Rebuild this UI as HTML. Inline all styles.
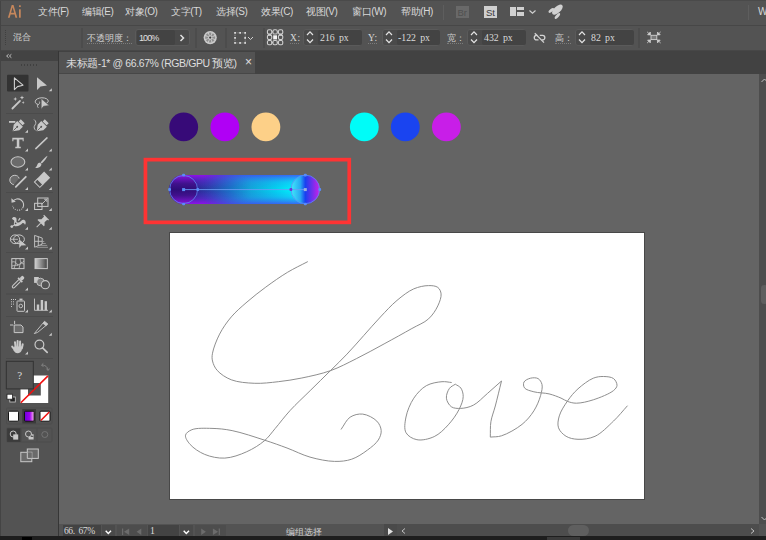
<!DOCTYPE html>
<html><head><meta charset="utf-8">
<style>
*{margin:0;padding:0;box-sizing:border-box}
html,body{width:766px;height:540px;overflow:hidden;background:#535353;font-family:"Liberation Sans",sans-serif;color:#d8d8d8}
.a{position:absolute}
.t{position:absolute;white-space:nowrap;font-size:10px;line-height:12px;letter-spacing:-0.4px}
.m{position:absolute;white-space:nowrap;font-family:"Liberation Serif",serif;font-size:9.8px;line-height:12px;letter-spacing:0;word-spacing:1.8px;color:#dadada}
.s{position:absolute;white-space:nowrap;font-family:"Liberation Serif",serif;font-size:9px;line-height:12px;color:#d0d0d0}
.box{position:absolute;background:#424242;border-radius:2px}
.obox{position:absolute;border:1px solid #5a5a5a;border-radius:3px;background:#4a4a4a}
.vs{position:absolute;width:2px;background:#4c4c4c}
.ul{position:absolute;height:1px;border-top:1px dotted #7c7c7c}
svg{position:absolute;overflow:visible}
</style></head><body>
<!-- base regions -->
<div class="a" style="left:0;top:0;width:766px;height:25px;background:#535353"></div>
<div class="a" style="left:0;top:25px;width:766px;height:1px;background:#474747"></div>
<div class="a" style="left:0;top:26px;width:766px;height:25px;background:#535353"></div>
<div class="a" style="left:0;top:50px;width:766px;height:1px;background:#474747"></div>
<div class="a" style="left:59px;top:51px;width:707px;height:23px;background:#424242"></div>
<div class="a" style="left:59px;top:52px;width:196px;height:22px;background:#535353"></div>
<div class="a" style="left:0;top:51px;width:58px;height:486px;background:#535353"></div>
<div class="a" style="left:1px;top:51px;width:57px;height:10px;background:#434343"></div>
<div class="a" style="left:0;top:0;width:1px;height:540px;background:#444"></div>
<div class="a" style="left:0;top:0;width:766px;height:1px;background:#4a4a4a"></div>
<div class="a" style="left:59px;top:73px;width:196px;height:1px;background:#474747"></div>
<div class="a" style="left:57.5px;top:51px;width:1.5px;height:486px;background:#363636"></div>
<div class="a" style="left:59px;top:74px;width:700px;height:450px;background:#646464"></div>
<div class="a" style="left:759px;top:74px;width:7px;height:450px;background:#4d4d4d"></div>
<div class="a" style="left:760.5px;top:284.5px;width:7px;height:19.5px;background:#5f5f5f;border-radius:6px"></div>
<div class="a" style="left:759px;top:524px;width:7px;height:12px;background:#535353"></div>
<div class="a" style="left:59px;top:524px;width:700px;height:12px;background:#535353"></div>
<div class="a" style="left:0;top:536px;width:766px;height:4px;background:#1e1e1e"></div>
<div class="a" style="left:22px;top:537px;width:10px;height:3px;background:#000"></div>
<div class="a" style="left:547px;top:537px;width:33px;height:3px;background:#3a3a3a"></div>

<!-- menu -->
<svg style="left:0;top:0" width="30" height="25"><g fill="#c6875c"><path d="M11.7 5 H13.5 L17.3 17.7 H15.5 L14.6 14.4 H10.6 L9.7 17.7 H7.9Z M11.05 12.8 H14.15 L12.6 7.2Z"/><rect x="19" y="9.3" width="1.75" height="8.4"/><rect x="18.95" y="5.2" width="1.85" height="1.9" rx="0.5"/></g></svg>
<div class="t" style="left:38px;top:6px">文件(F)</div>
<div class="t" style="left:82px;top:6px">编辑(E)</div>
<div class="t" style="left:125px;top:6px">对象(O)</div>
<div class="t" style="left:171px;top:6px">文字(T)</div>
<div class="t" style="left:216px;top:6px">选择(S)</div>
<div class="t" style="left:261px;top:6px">效果(C)</div>
<div class="t" style="left:306px;top:6px">视图(V)</div>
<div class="t" style="left:352px;top:6px">窗口(W)</div>
<div class="t" style="left:401px;top:6px">帮助(H)</div>
<div class="a" style="left:443px;top:5px;width:1px;height:15px;background:#5e5e5e"></div>
<div class="a" style="left:456px;top:6px;width:13px;height:12px;background:#696969"></div>
<div class="t" style="left:457.5px;top:6.5px;font-size:9.5px;letter-spacing:0;color:#505050">Br</div>
<div class="a" style="left:484px;top:6px;width:13px;height:12px;background:#cfcfcf"></div>
<div class="t" style="left:486px;top:6.5px;font-size:9.5px;letter-spacing:0;color:#3a3a3a">St</div>
<div class="a" style="left:510px;top:7px;width:6px;height:9px;background:#d0d0d0"></div>
<div class="a" style="left:517px;top:7px;width:7px;height:3px;background:#d0d0d0"></div>
<div class="a" style="left:517px;top:12px;width:7px;height:4px;background:#d0d0d0"></div>
<svg style="left:529px;top:10px" width="8" height="4"><path d="M0.5 0.5 L3.5 3.2 L6.5 0.5" stroke="#d0d0d0" stroke-width="1.2" fill="none"/></svg>
<svg style="left:540px;top:0" width="30" height="25"><g fill="#d0d0d0"><ellipse cx="17.4" cy="9.6" rx="6.6" ry="3.2" transform="rotate(-42 17.4 9.6)"/><ellipse cx="11.3" cy="10.4" rx="3.3" ry="1.5" transform="rotate(-39 11.3 10.4)"/><ellipse cx="17.4" cy="16" rx="3.6" ry="1.5" transform="rotate(-47 17.4 16)"/></g></svg>
<div class="a" style="left:748px;top:5px;width:1px;height:15px;background:#5e5e5e"></div>
<div class="t" style="left:758px;top:6px;letter-spacing:0">W</div>

<!-- control bar -->
<div class="a" style="left:5px;top:30px;width:0;height:15px;border-left:1px dotted #404040"></div>
<div class="s" style="left:13px;top:31px">混合</div>
<div class="vs" style="left:81px;top:28px;height:20px"></div>
<div class="s" style="left:87px;top:32px">不透明度：</div>
<div class="ul" style="left:87px;top:42.6px;width:45px"></div>
<div class="obox" style="left:135px;top:29px;width:55px;height:16.5px"></div>
<div class="box" style="left:137px;top:30px;width:38px;height:14.5px;background:#434343"></div>
<div class="t" style="left:139px;top:32px;font-size:9px;letter-spacing:-0.9px;color:#e0e0e0">100%</div>
<svg style="left:179px;top:34px" width="6" height="8"><path d="M1.5 1 L4.5 4 L1.5 7" stroke="#e0e0e0" stroke-width="1.5" fill="none"/></svg>
<div class="vs" style="left:195px;top:28px;height:20px"></div>
<!-- recolor globe -->
<svg style="left:203px;top:30px" width="15" height="15" viewBox="0 0 15 15"><circle cx="7.2" cy="7.6" r="6.6" fill="#cacaca"/><path d="M9.33 7.03 L12.03 6.31 A5 5 0 0 1 12.03 8.89 L9.33 8.17 Z M9.11 8.70 L11.53 10.10 A5 5 0 0 1 9.70 11.93 L8.30 9.51 Z M7.77 9.73 L8.49 12.43 A5 5 0 0 1 5.91 12.43 L6.63 9.73 Z M6.10 9.51 L4.70 11.93 A5 5 0 0 1 2.87 10.10 L5.29 8.70 Z M5.07 8.17 L2.37 8.89 A5 5 0 0 1 2.37 6.31 L5.07 7.03 Z M5.29 6.50 L2.87 5.10 A5 5 0 0 1 4.70 3.27 L6.10 5.69 Z M6.63 5.47 L5.91 2.77 A5 5 0 0 1 8.49 2.77 L7.77 5.47 Z M8.30 5.69 L9.70 3.27 A5 5 0 0 1 11.53 5.10 L9.11 6.50 Z" fill="#8e8e8e"/><circle cx="7.2" cy="7.6" r="1.1" fill="#3a3a3a"/></svg>
<div class="vs" style="left:225px;top:28px;height:20px"></div>
<!-- transform box -->
<svg style="left:234px;top:32px" width="20" height="12" viewBox="0 0 20 12">
<rect x="1" y="0.85" width="10.2" height="10.1" fill="none" stroke="#b8b8b8" stroke-width="0.7" stroke-dasharray="0.8 0.9"/>
<g fill="#e0e0e0"><rect x="0.2" y="0" width="1.7" height="1.7"/><rect x="10.3" y="0" width="1.7" height="1.7"/><rect x="0.2" y="10.1" width="1.7" height="1.7"/><rect x="10.3" y="10.1" width="1.7" height="1.7"/><rect x="5.25" y="0" width="1.7" height="1.7"/><rect x="5.25" y="10.1" width="1.7" height="1.7"/><rect x="0.2" y="5.05" width="1.7" height="1.7"/><rect x="10.3" y="5.05" width="1.7" height="1.7"/></g>
<path d="M14 5 L16.5 7.5 L19 5" stroke="#d0d0d0" stroke-width="1" fill="none"/>
</svg>
<div class="vs" style="left:263px;top:28px;height:20px"></div>
<!-- reference point -->
<svg style="left:266px;top:28px" width="19" height="19" viewBox="0 0 19 19"><g fill="none" stroke="#cfcfcf" stroke-width="1.1"><rect x="1.45" y="1.75" width="4.3" height="4.3" rx="1.4" /><rect x="6.95" y="1.75" width="4.3" height="4.3" rx="1.4" /><rect x="12.45" y="1.75" width="4.3" height="4.3" rx="1.4" /><rect x="1.45" y="7.15" width="4.3" height="4.3" rx="1.4" /><rect x="12.45" y="7.15" width="4.3" height="4.3" rx="1.4" /><rect x="1.45" y="12.45" width="4.3" height="4.3" rx="1.4" /><rect x="6.95" y="12.45" width="4.3" height="4.3" rx="1.4" /><rect x="12.45" y="12.45" width="4.3" height="4.3" rx="1.4" /><path d="M5.80 3.90 H6.90 M11.30 3.90 H12.40 M5.80 14.60 H6.90 M11.30 14.60 H12.40 M2.20 5.90 L5.00 7.30 M5.00 5.90 L2.20 7.30 M2.20 11.30 L5.00 12.60 M5.00 11.30 L2.20 12.60 M13.20 5.90 L16.00 7.30 M16.00 5.90 L13.20 7.30 M13.20 11.30 L16.00 12.60 M16.00 11.30 L13.20 12.60"/></g><rect x="7.20" y="7.30" width="3.8" height="3.8" fill="#f4f4f4"/><rect x="7.20" y="11.10" width="3.8" height="0.9" fill="#9a9a9a"/></svg>
<!-- X -->
<div class="s" style="left:290px;top:32px;font-size:9.5px;letter-spacing:0.6px;color:#d8d8d8">X:</div>
<div class="ul" style="left:290px;top:42.6px;width:9px"></div>
<div class="obox" style="left:303px;top:29px;width:59px;height:16.5px"></div>
<svg style="left:305.8px;top:31px" width="8" height="13"><path d="M1 4 L4 0.8 L7 4 M1 8.5 L4 11.7 L7 8.5" stroke="#e4e4e4" stroke-width="1.2" fill="none"/></svg>
<div class="box" style="left:318px;top:30px;width:44px;height:14.5px;background:#434343"></div>
<div class="m" style="left:320px;top:32px">216 px</div>
<!-- Y -->
<div class="s" style="left:368px;top:32px;font-size:9.5px;letter-spacing:0.6px;color:#d8d8d8">Y:</div>
<div class="ul" style="left:368px;top:42.6px;width:9px"></div>
<div class="obox" style="left:382px;top:29px;width:58px;height:16.5px"></div>
<svg style="left:384.8px;top:31px" width="8" height="13"><path d="M1 4 L4 0.8 L7 4 M1 8.5 L4 11.7 L7 8.5" stroke="#e4e4e4" stroke-width="1.2" fill="none"/></svg>
<div class="box" style="left:397px;top:30px;width:43px;height:14.5px;background:#434343"></div>
<div class="m" style="left:398px;top:32px">-122 px</div>
<!-- W -->
<div class="s" style="left:447px;top:32px">宽：</div>
<div class="ul" style="left:447px;top:42.6px;width:16px"></div>
<div class="obox" style="left:467px;top:29px;width:59px;height:16.5px"></div>
<svg style="left:469.8px;top:31px" width="8" height="13"><path d="M1 4 L4 0.8 L7 4 M1 8.5 L4 11.7 L7 8.5" stroke="#e4e4e4" stroke-width="1.2" fill="none"/></svg>
<div class="box" style="left:482px;top:30px;width:44px;height:14.5px;background:#434343"></div>
<div class="m" style="left:484px;top:32px">432 px</div>
<!-- link -->
<svg style="left:533px;top:32px" width="13" height="12" viewBox="0 0 13 12"><g fill="none" stroke="#d4d4d4" stroke-width="1.3"><path d="M4.3 3.4 H3.5 A2.25 2.25 0 0 0 3.5 7.9 H5.5 M6.8 3.4 H9.6 A2.25 2.25 0 0 1 9.6 7.9 H8.8"/><path d="M1.8 1.2 L11 10.6"/></g></svg>
<!-- H -->
<div class="s" style="left:555px;top:32px">高：</div>
<div class="ul" style="left:555px;top:42.6px;width:16px"></div>
<div class="obox" style="left:575px;top:29px;width:59px;height:16.5px"></div>
<svg style="left:577.8px;top:31px" width="8" height="13"><path d="M1 4 L4 0.8 L7 4 M1 8.5 L4 11.7 L7 8.5" stroke="#e4e4e4" stroke-width="1.2" fill="none"/></svg>
<div class="box" style="left:590px;top:30px;width:44px;height:14.5px;background:#434343"></div>
<div class="m" style="left:591px;top:32px">82 px</div>
<div class="vs" style="left:638px;top:28px;height:20px"></div>
<svg style="left:646px;top:31px" width="16" height="14" viewBox="0 0 16 14"><rect x="5" y="4.3" width="5.8" height="4.3" fill="#7a7a7a" stroke="#d0d0d0" stroke-width="0.9"/><path d="M4.40 3.90 L1.60 3.75 L4.30 1.05 Z M4.40 3.90 L1.10 0.85 M4.40 9.00 L1.60 9.15 L4.30 11.85 Z M4.40 9.00 L1.10 12.05 M11.40 3.90 L14.20 3.75 L11.50 1.05 Z M11.40 3.90 L14.70 0.85 M11.40 9.00 L14.20 9.15 L11.50 11.85 Z M11.40 9.00 L14.70 12.05" fill="#d0d0d0" stroke="#d0d0d0" stroke-width="0.8" stroke-linejoin="round"/></svg>


<svg style="left:0;top:0" width="60" height="470" viewBox="0 0 60 470">
<!-- header << -->
<path d="M8.6 54.3 L6.6 56 L8.6 57.7 M11.4 54.3 L9.4 56 L11.4 57.7" stroke="#c0c0c0" stroke-width="1" fill="none"/>
<g fill="#404040"><rect x="21" y="64" width="1" height="2"/><rect x="24" y="64" width="1" height="2"/><rect x="27" y="64" width="1" height="2"/><rect x="30" y="64" width="1" height="2"/><rect x="33" y="64" width="1" height="2"/><rect x="36" y="64" width="1" height="2"/></g>
<!-- selection tool -->
<rect x="7" y="74.7" width="21.5" height="16.8" rx="1" fill="#333"/>
<path d="M14.4 77.8 V89.6 L17.5 86.6 L23 85.2 Z" fill="none" stroke="#d0d0d0" stroke-width="1.1" stroke-linejoin="round"/>
<path d="M37 77.3 V90 L40.5 86.5 L47 85.5 Z" fill="#c8c8c8"/>
<g fill="#c8c8c8">
<path d="M48.8 91.3 L51.8 91.3 L51.8 88.3Z"/>
<path d="M25 132.7 L28 132.7 L28 129.7Z"/>
<path d="M25 151.5 L28 151.5 L28 148.5Z M48.8 151.5 L51.8 151.5 L51.8 148.5Z"/>
<path d="M25 170.6 L28 170.6 L28 167.6Z M48.8 170.6 L51.8 170.6 L51.8 167.6Z"/>
<path d="M25 190 L28 190 L28 187Z M48.8 190 L51.8 190 L51.8 187Z"/>
<path d="M25 211 L28 211 L28 208Z M48.8 211 L51.8 211 L51.8 208Z"/>
<path d="M25 229.8 L28 229.8 L28 226.8Z M48.8 229.8 L51.8 229.8 L51.8 226.8Z"/>
<path d="M25 249.5 L28 249.5 L28 246.5Z M48.8 249.5 L51.8 249.5 L51.8 246.5Z"/>
<path d="M25 290.5 L28 290.5 L28 287.5Z"/>
<path d="M25 312.5 L28 312.5 L28 309.5Z M48.8 312.5 L51.8 312.5 L51.8 309.5Z"/>
<path d="M48.8 335.8 L51.8 335.8 L51.8 332.8Z"/>
<path d="M25 354.6 L28 354.6 L28 351.6Z"/>
</g>
<!-- separators -->
<g fill="#4b4b4b"><rect x="6" y="113" width="47" height="1"/><rect x="6" y="192" width="47" height="1"/><rect x="6" y="252" width="47" height="1"/><rect x="6" y="293.5" width="47" height="1"/><rect x="6" y="316" width="47" height="1"/><rect x="6" y="358" width="47" height="1"/></g>
<!-- magic wand -->
<path d="M12.4 108.5 L20 100.9" stroke="#c8c8c8" stroke-width="1.8" stroke-linecap="round"/>
<path d="M15.30 96.90 L15.90 98.40 L17.40 99.00 L15.90 99.60 L15.30 101.10 L14.70 99.60 L13.20 99.00 L14.70 98.40 Z M22.00 95.50 L22.60 97.00 L24.10 97.60 L22.60 98.20 L22.00 99.70 L21.40 98.20 L19.90 97.60 L21.40 97.00 Z M23.20 101.10 L23.65 102.15 L24.70 102.60 L23.65 103.05 L23.20 104.10 L22.75 103.05 L21.70 102.60 L22.75 102.15 Z" fill="#c8c8c8"/>
<!-- lasso -->
<path d="M38.5 104.6 C36 104 35 102.8 35.3 101.2 C35.8 99 38.8 97.8 42 97.8 C45.5 97.8 48 99 48.2 100.8 C48.3 102 47.3 103 46 103.5" fill="none" stroke="#c8c8c8" stroke-width="1"/>
<path d="M38.6 104.4 C37.3 105 37 106.5 38.3 107.8 M38.6 104.4 C39.6 103.6 40 102.4 39.4 101.6" fill="none" stroke="#c8c8c8" stroke-width="0.9"/>
<path d="M41.2 98.6 V109.2 L43.6 106.2 L49.3 105.6Z" fill="#c8c8c8" stroke="#535353" stroke-width="0.6"/>
<!-- pen -->
<rect x="9" y="121" width="6.3" height="1.8" fill="#c8c8c8"/>
<g transform="translate(13,131) rotate(45)"><path d="M0 0.5 L-4 -5 L-4 -10 L4 -10 L4 -5Z M-2.8 -13.8 H2.8 V-10.8 H-2.8Z" fill="#c8c8c8"/><path d="M0 -0.5 V-5.5" stroke="#535353" stroke-width="0.8"/><circle cx="0" cy="-6" r="0.9" fill="#535353"/></g>
<!-- curvature pen -->
<g transform="translate(37,131) rotate(45)"><path d="M0 0.5 L-4 -5 L-4 -10 L4 -10 L4 -5Z M-2.8 -13.8 H2.8 V-10.8 H-2.8Z" fill="#c8c8c8"/><path d="M0 -0.5 V-5.5" stroke="#535353" stroke-width="0.8"/><circle cx="0" cy="-6" r="0.9" fill="#535353"/></g>
<path d="M34 119.5 C36 121 36.5 123 35 125 C33.5 127 34 129 36 130.5" fill="none" stroke="#c8c8c8" stroke-width="0.9"/>
<!-- T -->
<path d="M12.3 137.8 H23.7 V141.3 H22.6 V139.6 H19.3 V146.7 H20.8 V148.3 H15.3 V146.7 H16.8 V139.6 H13.4 V141.3 H12.3Z" fill="#c8c8c8"/>
<!-- line -->
<path d="M35.8 148.6 L47 137.9" stroke="#c8c8c8" stroke-width="1.5" stroke-linecap="round"/>
<!-- ellipse -->
<ellipse cx="17.9" cy="162" rx="6.9" ry="5.2" fill="#6b6b6b" stroke="#c8c8c8" stroke-width="1.1"/>
<!-- brush -->
<path d="M47.6 155.8 C47 158 44 161.5 41.8 163.6 L40.6 162.4 C42.6 160.2 45.6 156.6 47.6 155.8Z" fill="#c8c8c8"/>
<path d="M40.2 162.8 L41.4 164 C41.5 166.5 39 168.3 35 168 C36.6 166.8 36.8 165.6 37.4 164.4 C38 163.2 39 162.8 40.2 162.8Z" fill="#c8c8c8"/>
<!-- shaper -->
<path d="M19.2 178.5 C18.5 176.2 16.8 175.3 14.8 175.3 C12 175.3 9.8 177.4 9.8 180 C9.8 182.4 11.5 184.3 13.8 184.7" fill="#6b6b6b" stroke="#c8c8c8" stroke-width="1"/>
<path d="M15.8 186.8 L25.8 176.8" stroke="#c8c8c8" stroke-width="1.8" stroke-linecap="round"/>
<!-- eraser -->
<g transform="translate(41.5,180.3) rotate(45)"><rect x="-4.3" y="-8" width="8.6" height="10" fill="#c8c8c8"/><rect x="-3.8" y="2" width="7.6" height="4.2" fill="none" stroke="#c8c8c8" stroke-width="1"/></g>
<!-- rotate -->
<path d="M12.8 201.5 A5.8 5.8 0 1 1 22.6 208.2" fill="none" stroke="#c8c8c8" stroke-width="1.1"/>
<path d="M22 208.8 A5.8 5.8 0 0 1 12.6 205.8" fill="none" stroke="#c8c8c8" stroke-width="1.1" stroke-dasharray="1 1.2"/>
<path d="M11.3 198.3 L11.6 202.8 L15.8 201.8Z" fill="#c8c8c8"/>
<!-- scale -->
<rect x="37.7" y="198" width="10.3" height="8.4" fill="none" stroke="#c8c8c8" stroke-width="1"/>
<rect x="34.6" y="203.3" width="7.4" height="6.2" fill="none" stroke="#c8c8c8" stroke-width="1"/>
<path d="M41.5 204.5 L46.6 199.4 M44.2 199.3 H46.8 V201.9" fill="none" stroke="#c8c8c8" stroke-width="0.9"/>
<!-- width/warp -->
<path d="M12 218.5 C12.5 216.6 15.2 216.4 16.2 218 C17 219.5 16.2 221 16.7 222 C17.6 223 19.5 222.6 21 221 C22.5 219.4 24.6 219.4 25.5 221.4 C26 222.8 25.6 224.2 25 224.8 C24.6 223.6 23.6 222.6 22.6 223.1 C21 224.6 19 226.3 16 226.3 C14.6 226.3 13.8 225.6 13.8 224.2 C14 222.6 14.6 221.2 14 220.3 C13.4 219.7 12.3 219.6 12 218.5Z" fill="#c8c8c8"/>
<path d="M19.6 217.8 L20.6 218.5 L18.9 221 L18 220.3Z" fill="#c8c8c8"/>
<circle cx="15.6" cy="223.3" r="0.9" fill="#535353"/>
<circle cx="11.8" cy="226.6" r="1.4" fill="#c8c8c8"/>
<path d="M12.5 226 L14.5 225" stroke="#c8c8c8" stroke-width="0.9"/>
<!-- pin -->
<g transform="translate(42.3,221.5) rotate(45)"><path d="M-3.5 -6 H3.5 V-4.8 H2.2 V-1 L4.5 1.3 V2.3 H-4.5 V1.3 L-2.2 -1 V-4.8 H-3.5Z" fill="#c8c8c8"/><path d="M0 2.3 V8" stroke="#c8c8c8" stroke-width="1"/></g>
<!-- shape builder -->
<ellipse cx="15" cy="239.3" rx="4.6" ry="4.4" fill="none" stroke="#c8c8c8" stroke-width="1"/>
<ellipse cx="19" cy="239.3" rx="5.4" ry="4.4" fill="none" stroke="#c8c8c8" stroke-width="1"/>
<path d="M10.8 239.3 H18" stroke="#c8c8c8" stroke-width="0.8"/>
<path d="M19.3 239.5 V248 L21.3 245.6 L26.3 245.2Z" fill="#c8c8c8"/>
<!-- perspective -->
<path d="M34.6 235.4 L42.2 238 V244.2 L34.6 247.2Z M38.3 236.7 V245.8 M34.6 241.3 H42.2" fill="none" stroke="#c8c8c8" stroke-width="0.9"/>
<path d="M36.5 247.3 H48 M39 245.4 H47.2 M41.5 243.5 H45.8 M42.2 241.5 H44.3" stroke="#a8a8a8" stroke-width="0.8"/>
<!-- mesh -->
<rect x="11.8" y="258.6" width="12.2" height="10" fill="none" stroke="#c8c8c8" stroke-width="1"/>
<path d="M12 262 C15 261 17 263 18 266 M16 258.7 C15.5 261 16 264 14 268.5 M20 258.7 C20 262 22 264 24 264 M12 266 C15 265 19 266 24 261 M19 268.6 C19.5 266 20 264 21 262" fill="none" stroke="#c8c8c8" stroke-width="0.8"/>
<!-- gradient -->
<defs><linearGradient id="gt" x1="0" x2="1"><stop offset="0" stop-color="#d0d0d0"/><stop offset="1" stop-color="#444"/></linearGradient></defs>
<rect x="35" y="258.6" width="12.3" height="10" fill="url(#gt)" stroke="#c8c8c8" stroke-width="1"/>
<!-- eyedropper -->
<g transform="translate(17.6,282.6) rotate(45)"><path d="M-1.3 -3 V5.5 C-1.3 7.5 1.3 7.5 1.3 5.5 V-3" fill="none" stroke="#c8c8c8" stroke-width="1"/><rect x="-3" y="-4.5" width="6" height="1.6" fill="#c8c8c8"/><rect x="-1.8" y="-8.5" width="3.6" height="4.2" rx="1.5" fill="#c8c8c8"/></g>
<!-- blend tool -->
<rect x="34.1" y="277" width="4.7" height="5.9" fill="#c8c8c8"/>
<circle cx="40.5" cy="282" r="3.8" fill="#7a7a7a" stroke="#c8c8c8" stroke-width="0.9"/>
<circle cx="45.3" cy="284.7" r="4.1" fill="#535353" stroke="#c8c8c8" stroke-width="1.1"/>
<!-- symbol sprayer -->
<g fill="#c8c8c8"><rect x="11" y="299" width="1" height="1"/><rect x="13" y="299" width="1" height="1"/><rect x="15" y="299" width="1" height="1"/><rect x="11" y="301.3" width="1" height="1"/><rect x="13" y="301.3" width="1" height="1"/><rect x="11" y="303.6" width="1" height="1"/><rect x="13" y="303.6" width="1" height="1"/><rect x="11" y="306" width="1" height="1"/><rect x="19.5" y="298.6" width="3" height="1.8"/></g>
<rect x="17" y="301" width="7.5" height="10.3" rx="0.6" fill="none" stroke="#c8c8c8" stroke-width="1"/>
<circle cx="20.75" cy="306" r="1.8" fill="none" stroke="#c8c8c8" stroke-width="0.9"/>
<!-- graph -->
<path d="M34.5 298.6 V310.3 H48" fill="none" stroke="#c8c8c8" stroke-width="0.9"/>
<rect x="36.8" y="304.5" width="2.4" height="5.8" fill="#c8c8c8"/>
<rect x="40.7" y="300" width="2.4" height="10.3" fill="#c8c8c8"/>
<rect x="44.6" y="301.2" width="2.4" height="9.1" fill="#c8c8c8"/>
<!-- artboard -->
<path d="M10 325 H13.3 M14.6 320.8 V324" stroke="#c8c8c8" stroke-width="1"/>
<path d="M14.2 325 H21 L23 327 V332.6 H14.2Z" fill="#6b6b6b" stroke="#c8c8c8" stroke-width="1"/>
<!-- slice -->
<path d="M34.3 333.6 L44.5 321.3 L47.8 324 L37.6 332.4Z" fill="none" stroke="#c8c8c8" stroke-width="0.9"/>
<path d="M42.8 323.4 L44.5 321.3 L47.8 324 L46 326.2Z" fill="#c8c8c8"/>
<!-- hand -->
<g stroke="#c8c8c8" stroke-width="2" stroke-linecap="round" fill="none"><path d="M15 342.2 L15.6 347.5 M17.6 340.9 V347.5 M20.1 341.6 L19.9 347.5 M22.7 344.3 L21.8 348.5 M12.2 346.6 L14.8 350"/></g>
<path d="M14.2 346.5 H22.3 L21.6 350.5 C20.8 352.3 19.5 353.2 17.6 353.2 C15.6 353.2 14.5 352 13.6 350.5Z" fill="#c8c8c8"/>
<!-- zoom -->
<circle cx="39.4" cy="344.6" r="4.4" fill="none" stroke="#c8c8c8" stroke-width="1.2"/>
<path d="M42.6 347.8 L47.2 352.3" stroke="#c8c8c8" stroke-width="1.7" stroke-linecap="round"/>
</svg>

<svg style="left:0;top:0" width="60" height="470" viewBox="0 0 60 470">
<!-- stroke box -->
<path d="M20.5 375.6 H48.2 V403 H20.5Z M28 383 V395.6 H40.8 V383Z" fill="#fff" fill-rule="evenodd"/>
<path d="M20.8 402.7 L48 375.9" stroke="#f01010" stroke-width="1.6"/>
<!-- fill box -->
<rect x="6.3" y="361.3" width="27" height="27.6" fill="#535353" stroke="#333" stroke-width="1"/>
<text x="19.8" y="379.3" font-family="Liberation Serif" font-size="11" fill="#dcdcdc" text-anchor="middle">?</text>
<!-- swap -->
<path d="M42 365 C44 365 47 366 48 369.5 M41.5 365 L43.3 363.4 M41.5 365 L43.3 366.8 M48 370.5 L46.5 368.6 M48 370.5 L49.5 368.6" fill="none" stroke="#8a8a8a" stroke-width="0.9"/>
<!-- default -->
<rect x="9.8" y="397" width="5.5" height="5" fill="#222" stroke="#ccc" stroke-width="0.8"/>
<rect x="7" y="394.2" width="5.5" height="5" fill="#fff" stroke="#222" stroke-width="0.8"/>
<!-- color mode row -->
<rect x="6.5" y="408" width="45.5" height="16" rx="1" fill="none" stroke="#4d4d4d" stroke-width="1"/>
<rect x="8.5" y="411.2" width="10" height="10" rx="1" fill="#fff" stroke="#111" stroke-width="1"/>
<rect x="22.3" y="409" width="13.7" height="14.4" fill="#3b3b3b"/>
<defs><linearGradient id="gm" x1="0" x2="1"><stop offset="0" stop-color="#6a00d8"/><stop offset="0.55" stop-color="#a000f0"/><stop offset="1" stop-color="#ffc0f0"/></linearGradient></defs>
<rect x="24.5" y="411.2" width="9.6" height="10" rx="1" fill="url(#gm)" stroke="#111" stroke-width="1"/>
<rect x="40" y="411.2" width="10" height="10" rx="1" fill="#fff" stroke="#111" stroke-width="1"/>
<path d="M40.8 420.5 L49.3 412" stroke="#f01010" stroke-width="1.5"/>
<!-- draw modes -->
<rect x="6.7" y="428" width="45.3" height="14" rx="1" fill="none" stroke="#4d4d4d" stroke-width="1"/>
<rect x="7.1" y="428.3" width="13.4" height="13.6" fill="#3b3b3b"/>
<circle cx="13.2" cy="434" r="3" fill="none" stroke="#c8c8c8" stroke-width="1"/>
<rect x="13.2" y="434.4" width="5" height="5.2" fill="#c8c8c8"/>
<circle cx="28.5" cy="434" r="3" fill="none" stroke="#c8c8c8" stroke-width="1"/>
<path d="M28.6 437 H33.6 V439.6 H28.6Z M31 434.2 H33.6 V437" fill="#c8c8c8"/>
<circle cx="44.8" cy="434.5" r="3" fill="none" stroke="#777" stroke-width="0.9"/>
<path d="M21.4 428.5 V441.5 M37 428.5 V441.5" stroke="#4d4d4d" stroke-width="1"/>
<!-- screen mode -->
<rect x="27.3" y="449" width="11" height="9.4" fill="#6a6a6a" stroke="#c8c8c8" stroke-width="1"/>
<rect x="20.8" y="452.3" width="11" height="9.4" fill="#6a6a6a" stroke="#c8c8c8" stroke-width="1"/>
<path d="M27.3 452.3 H31.8 V458.4 H27.3Z" fill="#6a6a6a"/>
<path d="M27.3 452.3 V458.4 H31.8" fill="none" stroke="#c8c8c8" stroke-width="1"/>
</svg>

<!-- tab -->
<div class="t" style="left:66px;top:57px;font-size:10.5px;line-height:12px;letter-spacing:-0.4px;color:#dedede">未标题-1* @ 66.67% (RGB/GPU 预览)</div>
<div class="t" style="left:245px;top:56px;font-size:12px;letter-spacing:0;color:#e0e0e0">×</div>

<!-- artboard -->
<div class="a" style="left:169px;top:232px;width:476px;height:268px;background:#484848"></div>
<div class="a" style="left:170px;top:233px;width:474px;height:266px;background:#fff"></div>

<!-- circles -->
<svg style="left:0;top:0" width="766" height="540">
<circle cx="183.7" cy="126.9" r="14.4" fill="#370a78"/>
<circle cx="224.9" cy="126.9" r="14.4" fill="#b000f5"/>
<circle cx="265.9" cy="126.9" r="14.4" fill="#fdd088"/>
<circle cx="364.3" cy="126.9" r="14.4" fill="#00fcf8"/>
<circle cx="405.3" cy="126.9" r="14.4" fill="#1a44f0"/>
<circle cx="446.4" cy="126.9" r="14.4" fill="#c81ee8"/>
<rect x="145.45" y="159.65" width="203.8" height="62.7" fill="none" stroke="#f33" stroke-width="3.7"/>
</svg>

<!-- love -->
<svg style="left:0;top:0" width="766" height="540"><path d="M307.80 261.60 C301.10 265.13 294.43 268.15 287.70 272.20 C280.43 276.57 272.73 282.00 265.80 287.10 C259.20 291.95 252.88 296.90 247.00 302.00 C241.42 306.85 235.90 311.49 231.30 316.90 C226.79 322.21 222.74 328.02 219.60 334.10 C216.49 340.12 213.40 348.17 212.50 353.20 C211.94 356.31 211.88 358.35 212.50 361.00 C213.23 364.07 214.69 367.56 217.20 370.40 C220.38 374.01 225.72 377.65 231.30 379.80 C237.90 382.35 246.95 382.99 254.80 383.30 C262.62 383.61 270.49 382.58 278.30 381.70 C286.15 380.82 293.62 379.68 301.80 378.00 C310.91 376.12 321.25 373.96 330.40 370.70 C339.40 367.50 347.57 363.04 356.30 358.70 C365.47 354.14 374.85 348.92 384.10 343.90 C393.39 338.86 403.84 333.06 411.90 328.50 C418.16 324.96 424.08 322.91 428.50 318.90 C432.53 315.24 435.68 310.34 437.80 305.90 C439.67 301.98 441.44 297.24 441.10 293.90 C440.84 291.35 439.66 288.80 437.80 287.40 C435.68 285.80 431.95 285.55 428.50 285.60 C424.13 285.66 418.58 286.77 413.70 288.90 C408.06 291.36 402.36 295.94 397.00 300.40 C391.23 305.20 385.87 311.23 380.40 317.00 C374.76 322.95 369.27 329.41 363.70 335.60 C358.14 341.78 352.63 348.17 347.00 354.10 C341.53 359.86 336.22 364.93 330.40 370.70 C324.01 377.04 316.92 383.96 310.20 390.60 C303.49 397.23 296.16 403.87 290.10 410.50 C284.57 416.54 279.69 423.21 275.10 428.60 C271.32 433.04 268.88 436.96 264.60 440.60 C259.69 444.77 253.26 448.81 246.80 451.70 C240.05 454.72 232.01 457.74 224.80 458.10 C217.99 458.44 210.64 456.85 204.70 454.40 C199.17 452.12 193.35 448.12 190.10 444.40 C187.62 441.56 184.99 437.72 185.50 435.20 C185.96 432.92 188.90 430.92 191.90 429.70 C196.53 427.81 205.31 428.25 212.00 428.40 C218.71 428.55 224.65 429.11 232.10 430.60 C241.80 432.54 255.17 437.13 265.00 440.30 C273.10 442.91 279.61 445.25 287.00 448.00 C294.61 450.84 302.10 454.87 310.00 457.10 C317.93 459.34 327.04 461.23 334.50 461.40 C340.73 461.54 346.27 461.04 351.70 459.20 C357.25 457.32 362.81 453.49 367.40 450.10 C371.56 447.03 376.02 443.65 378.30 440.00 C380.17 437.02 381.42 433.62 381.20 430.50 C380.97 427.31 379.32 423.68 376.80 421.10 C373.70 417.92 367.36 414.61 362.70 414.10 C358.47 413.63 353.63 414.85 350.10 417.20 C346.27 419.75 344.03 425.40 341.00 429.50 M451.70 382.50 C448.47 382.23 445.59 381.40 442.00 381.70 C437.36 382.09 430.92 383.07 426.30 385.70 C421.47 388.45 417.13 393.23 413.80 398.20 C410.23 403.54 407.22 410.90 406.00 417.00 C404.93 422.36 403.90 428.86 406.00 432.70 C407.90 436.19 412.66 438.85 416.90 439.70 C421.84 440.69 429.01 439.02 434.20 436.60 C439.51 434.12 444.16 429.32 448.30 424.80 C452.51 420.20 456.68 414.31 459.20 409.20 C461.30 404.94 463.13 400.41 463.20 396.60 C463.26 393.47 462.31 390.11 460.80 388.00 C459.50 386.17 457.13 385.47 455.30 384.20 M455.30 384.20 C453.37 385.57 450.95 386.32 449.50 388.30 C447.75 390.70 446.05 395.09 446.40 398.20 C446.74 401.25 448.96 405.11 451.40 406.80 C453.79 408.46 457.46 408.54 460.80 408.40 C464.69 408.24 469.23 407.27 473.30 405.20 C478.14 402.73 482.73 397.50 487.40 393.50 C492.13 389.44 496.80 385.17 501.50 381.00 M501.50 381.00 C499.43 389.33 497.24 398.64 495.30 406.00 C493.75 411.85 491.73 416.44 490.90 421.70 C490.10 426.81 490.50 431.97 490.30 437.10 M490.30 437.10 C494.03 436.67 497.36 437.13 501.50 435.80 C507.48 433.88 516.40 428.93 522.00 424.40 C526.92 420.43 530.77 415.73 533.90 410.80 C536.91 406.06 539.28 400.27 540.60 395.50 C541.67 391.61 542.70 387.50 542.00 384.50 C541.44 382.11 539.96 379.66 538.10 378.60 C536.17 377.50 532.86 377.63 530.50 378.20 C528.16 378.77 524.92 380.23 524.00 382.00 C523.19 383.57 523.37 386.36 524.50 387.90 C525.98 389.93 530.32 390.83 533.90 391.80 C538.29 392.99 544.40 392.76 549.10 393.90 C553.37 394.94 557.62 396.67 561.00 398.10 C563.62 399.21 565.35 400.66 567.80 401.50 C570.42 402.40 572.98 403.20 576.30 403.20 C580.99 403.20 587.49 401.68 593.30 399.80 C599.89 397.66 609.85 393.69 613.60 390.50 C615.56 388.83 616.88 387.26 617.00 385.40 C617.13 383.33 615.55 380.10 613.60 378.60 C611.32 376.85 606.80 376.56 603.40 376.50 C600.03 376.44 596.84 376.76 593.30 378.20 C588.52 380.14 582.38 384.87 578.00 388.80 C573.99 392.40 570.85 396.24 567.80 400.60 C564.57 405.22 560.76 410.96 559.30 415.90 C558.10 419.98 557.32 424.37 558.50 427.80 C559.65 431.15 562.93 434.38 566.10 436.30 C569.39 438.29 573.66 439.14 578.00 439.30 C583.14 439.49 589.52 438.82 595.00 436.30 C601.47 433.32 608.02 426.31 613.60 421.00 C618.77 416.08 622.87 410.80 627.50 405.70" fill="none" stroke="#888" stroke-width="0.95" stroke-linejoin="round"/></svg>

<svg style="left:0;top:0" width="766" height="540">
<defs>
<linearGradient id="bh" x1="169.6" x2="305" gradientUnits="userSpaceOnUse">
<stop offset="0" stop-color="#2a0c70"/>
<stop offset="0.15" stop-color="#2a1c84"/>
<stop offset="0.3" stop-color="#2844a8"/>
<stop offset="0.45" stop-color="#1874c4"/>
<stop offset="0.6" stop-color="#10a8d8"/>
<stop offset="0.8" stop-color="#00d8f0"/>
<stop offset="0.92" stop-color="#00f4fc"/>
<stop offset="1" stop-color="#20e4f8"/>
</linearGradient>
<linearGradient id="bv" x1="0" x2="0" y1="175" y2="204" gradientUnits="userSpaceOnUse">
<stop offset="0" stop-color="#9010e8" stop-opacity="1"/>
<stop offset="0.2" stop-color="#7020e0" stop-opacity="0.5"/>
<stop offset="0.5" stop-color="#6020e0" stop-opacity="0"/>
<stop offset="0.8" stop-color="#7020e0" stop-opacity="0.5"/>
<stop offset="1" stop-color="#9010e8" stop-opacity="1"/>
</linearGradient>
<linearGradient id="bv2" x1="0" x2="0" y1="175" y2="204" gradientUnits="userSpaceOnUse">
<stop offset="0" stop-color="#4050f0" stop-opacity="0.85"/>
<stop offset="0.25" stop-color="#3080f0" stop-opacity="0.3"/>
<stop offset="0.5" stop-color="#3080f0" stop-opacity="0"/>
<stop offset="0.75" stop-color="#3080f0" stop-opacity="0.3"/>
<stop offset="1" stop-color="#4050f0" stop-opacity="0.85"/>
</linearGradient>
<linearGradient id="mh" x1="169.6" x2="305" gradientUnits="userSpaceOnUse">
<stop offset="0" stop-color="#fff"/><stop offset="0.25" stop-color="#fff"/><stop offset="0.6" stop-color="#000"/><stop offset="1" stop-color="#000"/>
</linearGradient>
<linearGradient id="mh2" x1="169.6" x2="305" gradientUnits="userSpaceOnUse">
<stop offset="0" stop-color="#000"/><stop offset="0.25" stop-color="#000"/><stop offset="0.6" stop-color="#fff"/><stop offset="1" stop-color="#fff"/>
</linearGradient>
<mask id="m1" maskUnits="userSpaceOnUse" x="160" y="170" width="170" height="40"><rect x="160" y="170" width="170" height="40" fill="url(#mh)"/></mask>
<mask id="m2" maskUnits="userSpaceOnUse" x="160" y="170" width="170" height="40"><rect x="160" y="170" width="170" height="40" fill="url(#mh2)"/></mask>
<linearGradient id="rc" x1="290.8" x2="319.9" gradientUnits="userSpaceOnUse">
<stop offset="0" stop-color="#40ecfa"/>
<stop offset="0.33" stop-color="#28a8f2"/>
<stop offset="0.5" stop-color="#1840f0"/>
<stop offset="1" stop-color="#d01ee8"/>
</linearGradient>
<linearGradient id="lc" x1="0" x2="0" y1="175" y2="204" gradientUnits="userSpaceOnUse">
<stop offset="0" stop-color="#8a12dc"/>
<stop offset="0.3" stop-color="#40108a"/>
<stop offset="0.5" stop-color="#300c78"/>
<stop offset="0.7" stop-color="#40108a"/>
<stop offset="1" stop-color="#8a12dc"/>
</linearGradient>
</defs>
<path d="M183.6 175 H305 V204 H183.6 A14.5 14.5 0 0 1 183.6 175Z" fill="url(#bh)"/>
<path d="M183.6 175 H305 V204 H183.6 A14.5 14.5 0 0 1 183.6 175Z" fill="url(#bv)" mask="url(#m1)"/>
<path d="M183.6 175 H305 V204 H183.6 A14.5 14.5 0 0 1 183.6 175Z" fill="url(#bv2)" mask="url(#m2)"/>
<circle cx="183.6" cy="189.5" r="14.4" fill="url(#lc)" opacity="0.85"/>
<circle cx="305.3" cy="189.4" r="14.5" fill="url(#rc)"/>
<g fill="none" stroke="#5a8cf8" stroke-width="0.9" opacity="0.9">
<circle cx="183.6" cy="189.5" r="14"/>
<circle cx="305.3" cy="189.4" r="14.3"/>
</g>
<path d="M183.6 189.6 H305.3" stroke="#6a9af8" stroke-width="1" opacity="0.85"/>
<g fill="#5a8cf8">
<rect x="182.1" y="188.1" width="3" height="3"/>
<rect x="168.2" y="188.1" width="2.8" height="3" rx="1"/>
<rect x="196.3" y="188.1" width="2.8" height="3" rx="1"/>
<rect x="182.1" y="173.8" width="3" height="2.6" rx="1"/>
<rect x="182.1" y="202.7" width="3" height="2.6" rx="1"/>
<rect x="289.5" y="188.1" width="2.8" height="3" rx="1" fill="#6a3ad8"/>
<rect x="318.3" y="188.1" width="2.8" height="3" rx="1"/>
<rect x="303.8" y="173.8" width="3" height="2.6" rx="1"/>
<rect x="303.8" y="202.7" width="3" height="2.6" rx="1"/>
</g>
<rect x="303.8" y="188.1" width="3" height="3" fill="#9ab0e0"/>
</svg>

<!-- scrollbars / status -->
<div class="box" style="left:63px;top:525px;width:38px;height:11px;background:#434343;border-radius:0"></div>
<div class="m" style="left:64px;top:525px;font-size:9.5px;letter-spacing:-0.4px">66. 67%</div>
<div class="a" style="left:102px;top:525px;width:13px;height:11px;background:#4a4a4a"></div>
<svg style="left:105px;top:530px" width="7" height="5"><path d="M0.7 0.7 L3.3 3.5 L6 0.7" stroke="#fff" stroke-width="1.4" fill="none"/></svg>
<div class="a" style="left:117px;top:525px;width:30px;height:11px;background:#4d4d4d"></div>

<div class="a" style="left:148px;top:525px;width:31px;height:11px;background:#434343"></div>
<div class="m" style="left:150px;top:525px">1</div>
<div class="a" style="left:180px;top:525px;width:13px;height:11px;background:#4a4a4a"></div>
<svg style="left:183px;top:530px" width="7" height="5"><path d="M0.7 0.7 L3.3 3.5 L6 0.7" stroke="#fff" stroke-width="1.4" fill="none"/></svg>
<div class="a" style="left:195px;top:525px;width:31px;height:11px;background:#4d4d4d"></div>

<div class="t" style="left:286px;top:526px;font-size:9.4px;letter-spacing:0;color:#cfcfcf;font-family:'Liberation Serif',serif">编组选择</div>
<div class="a" style="left:384px;top:524px;width:13px;height:12px;background:#4a4a4a"></div>
<svg style="left:388px;top:528px" width="6" height="7"><path d="M0 0 L5 3.5 L0 7Z" fill="#e0e0e0"/></svg>
<div class="a" style="left:397px;top:524px;width:362px;height:12px;background:#4d4d4d"></div>
<svg style="left:401px;top:528px" width="5" height="6"><path d="M4 0.5 L1 3 L4 5.5" stroke="#c0c0c0" stroke-width="1" fill="none"/></svg>
<div class="a" style="left:568px;top:525px;width:21px;height:11px;background:#5f5f5f;border-radius:6px"></div>
<svg style="left:750px;top:528px" width="5" height="6"><path d="M1 0.5 L4 3 L1 5.5" stroke="#c0c0c0" stroke-width="1" fill="none"/></svg>
<svg style="left:761px;top:78px" width="6" height="5"><path d="M0.5 4 L3.5 1 L6.5 4" stroke="#c0c0c0" stroke-width="1" fill="none"/></svg>
<svg style="left:761px;top:516px" width="6" height="5"><path d="M0.5 1 L3.5 4 L6.5 1" stroke="#c0c0c0" stroke-width="1" fill="none"/></svg>
<svg style="left:0;top:0" width="240" height="540"><path d="M122 528.5 H123.2 V535 H122Z M129.2 528.5 L124 531.75 L129.2 535Z M141.3 528.5 L136.6 531.75 L141.3 535Z M201.2 528.5 L205.9 531.75 L201.2 535Z M212.9 528.5 L218.1 531.75 L212.9 535Z M218.7 528.5 H219.9 V535 H218.7Z" fill="#6c6c6c"/></svg>

</body></html>
